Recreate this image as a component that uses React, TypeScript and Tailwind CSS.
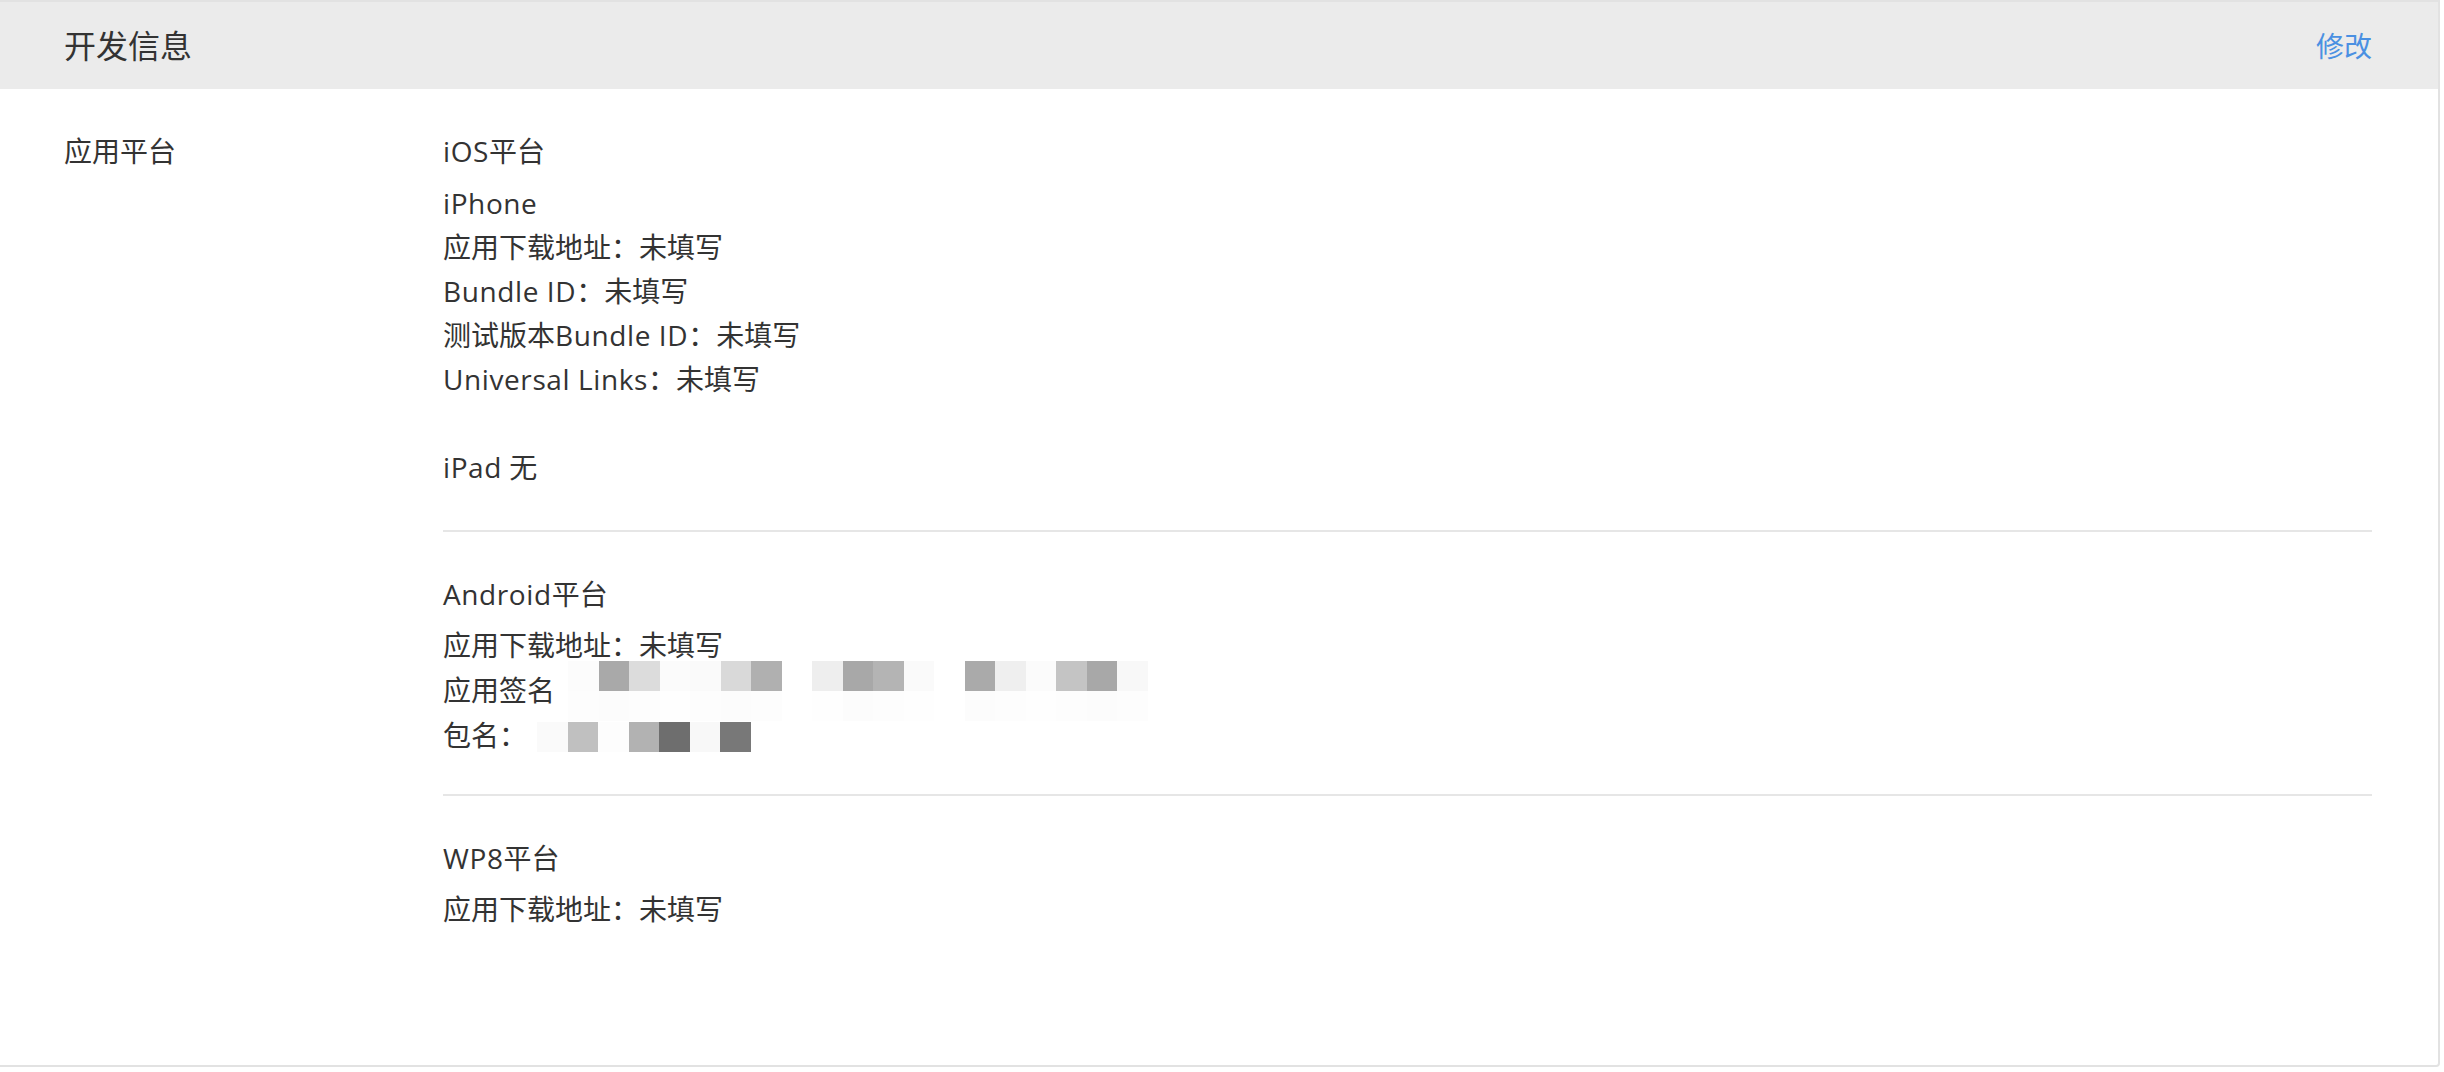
const signRow1 = [
  '#fcfcfc', '#a9a9a9', '#dcdcdc', '#fbfbfb', '#fafafa', '#d9d9d9', '#b0b0b0', '#ffffff', '#eeeeee', '#a8a8a8',
  '#b4b4b4', '#fafafa', '#ffffff', '#aaaaaa', '#efefef', '#fbfbfb', '#c4c4c4', '#a8a8a8', '#f8f8f8',
]
const signRow2 = [
  '#fdfdfd', '#fcfcfc', '#fdfdfd', '#fefefe', '#fdfdfd', '#fcfcfc', '#fdfdfd', '#ffffff', '#fefefe', '#fcfcfc',
  '#fdfdfd', '#fefefe', '#ffffff', '#fcfcfc', '#fdfdfd', '#fefefe', '#fdfdfd', '#fcfcfc', '#fdfdfd',
]
const pkgRow = ['#fafafa', '#c0c0c0', '#fdfdfd', '#b2b2b2', '#6e6e6e', '#f8f8f8', '#787878']

function Mosaic({ rows }: { rows: string[][] }) {
  return (
    <div className="flex flex-col">
      {rows.map((row, i) => (
        <div key={i} className="flex">
          {row.map((c, j) => (
            <div key={j} className="w-[30.5px] h-[30px]" style={{ backgroundColor: c }} />
          ))}
        </div>
      ))}
    </div>
  )
}

function Line({ children }: { children: React.ReactNode }) {
  return <div className="h-[44px] leading-[44px] whitespace-nowrap">{children}</div>
}

// latin runs are a touch wider in the original font
function L({ children }: { children: React.ReactNode }) {
  return <span className="tracking-[0.6px]">{children}</span>
}

export default function App() {
  return (
    <div
      className="w-[2444px] h-[1072px] bg-white text-[#333333] overflow-hidden"
      style={{ fontFamily: '"Open Sans", "Noto Sans CJK SC", sans-serif' }}
    >
      <div className="w-[2440px] border-t-2 border-r-2 border-b-2 border-[#e2e2e2] rounded-br-[4px]">
        {/* header */}
        <div className="h-[87px] bg-[#ebebeb] flex items-center justify-between pl-[64px] pr-[66px]">
          <h2 className="text-[32px] font-normal">开发信息</h2>
          <a className="text-[28px] text-[#4a90e2] cursor-pointer">修改</a>
        </div>

        {/* body */}
        <div className="h-[976px] flex pl-[64px] pr-[66px] pt-[40px] text-[28px]">
          <div className="w-[379px] shrink-0">
            <Line>应用平台</Line>
          </div>

          <div className="flex-1">
            <div className="pb-[41px] border-b-2 border-[#e6e6e6]">
              <div className="mb-[8px]">
                <Line><L>iOS</L>平台</Line>
              </div>
              <Line><L>iPhone</L></Line>
              <Line>应用下载地址：未填写</Line>
              <Line><L>Bundle ID</L>：未填写</Line>
              <Line>测试版本<L>Bundle ID</L>：未填写</Line>
              <Line><L>Universal Links</L>：未填写</Line>
              <div className="h-[44px]" />
              <Line><L>iPad</L> 无</Line>
            </div>

            <div className="pt-[40px] pb-[37px] border-b-2 border-[#e6e6e6]">
              <div className="mb-[7px]">
                <Line><L>Android</L>平台</Line>
              </div>
              <Line>应用下载地址：未填写</Line>
              <div className="h-[45px] flex items-center">
                <span className="w-[125px] shrink-0">应用签名</span>
                <div className="mt-[3px]">
                  <Mosaic rows={[signRow1, signRow2]} />
                </div>
              </div>
              <div className="h-[45px] flex items-center">
                <span className="w-[94px] shrink-0">包名：</span>
                <div className="mt-[5px]">
                  <Mosaic rows={[pkgRow]} />
                </div>
              </div>
            </div>

            <div className="pt-[40px]">
              <div className="mb-[7px]">
                <Line><L>WP8</L>平台</Line>
              </div>
              <Line>应用下载地址：未填写</Line>
            </div>
          </div>
        </div>
      </div>
    </div>
  )
}
